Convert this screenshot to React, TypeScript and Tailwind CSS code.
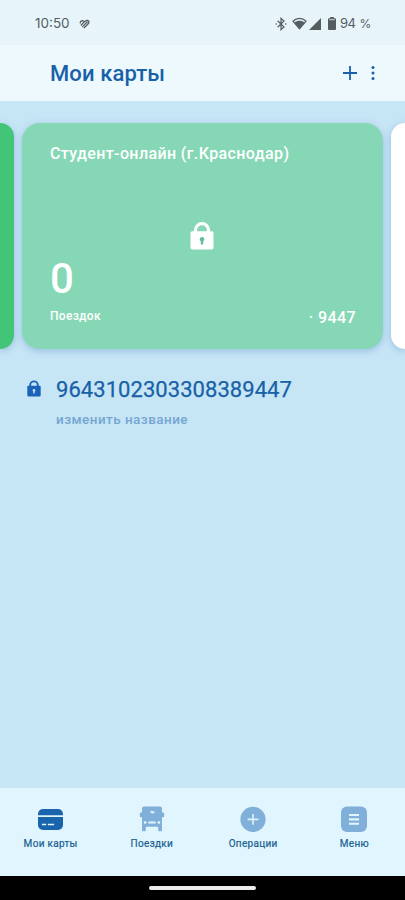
import type { ReactNode } from "react";

interface LockIconProps {
  className?: string;
  holeClassName?: string;
}

function LockIcon({ className, holeClassName }: LockIconProps) {
  return (
    <svg viewBox="0 0 24 28" className={className}>
      <path
        d="M5.5 12V8.2a6.5 6.5 0 0 1 13 0V12"
        fill="none"
        stroke="currentColor"
        strokeWidth="3.2"
      />
      <rect x="0.5" y="9.3" width="23" height="18.2" rx="1.8" fill="currentColor" />
      <g className={holeClassName}>
        <circle cx="12" cy="17.2" r="2.2" />
        <rect x="10.8" y="17.4" width="2.4" height="5.2" rx="0.6" />
      </g>
    </svg>
  );
}

function StatusBar() {
  return (
    <div className="flex h-[45px] items-center bg-[#e7f5fb] pt-[2px] pr-[34px] pl-[35px] text-[#555d61]">
      <span className="font-[Inter,Roboto,sans-serif] text-[13.5px]">10:50</span>
      <svg
        viewBox="0 0 11 10"
        className="ml-[9px] h-[10px] w-[11px]"
        fill="none"
        stroke="currentColor"
        strokeWidth="1.3"
        strokeLinecap="round"
        strokeLinejoin="round"
      >
        <path d="M1.2 3.9C1.4 2 3.3 1.2 4.8 2.2M2.2 6L5.8 2.4M3.6 7.6L8.2 3M5.2 8.8L9 5C10.4 3.6 10.2 1.8 8.8 1.4C7.5 1 6.6 1.7 5.8 2.4" />
      </svg>

      <div className="ml-auto flex items-center">
        <svg
          viewBox="0 0 12 14"
          className="h-[14px] w-[12px]"
          fill="none"
          stroke="currentColor"
          strokeWidth="1.2"
        >
          <path d="M2.6 3.8L9 10L6 12.7V1.3L9 4L2.6 10.2" />
          <circle cx="1.3" cy="7" r="0.8" fill="currentColor" stroke="none" />
          <circle cx="10.7" cy="7" r="0.8" fill="currentColor" stroke="none" />
        </svg>
        <svg viewBox="0 0 15 13" className="ml-[5px] h-[13px] w-[15px]">
          <path
            d="M.9 4.2C4.7.5 10.3.5 14.1 4.2L7.5 11.8Z"
            fill="none"
            stroke="currentColor"
            strokeWidth="1.2"
            strokeLinejoin="round"
          />
          <path d="M2.3 5.3C5.4 3.2 9.6 3.2 12.7 5.3L7.5 12Z" fill="currentColor" />
        </svg>
        <svg viewBox="0 0 12 12" className="ml-[2px] h-[12px] w-[12px]" fill="currentColor">
          <path d="M12 0V12H0Z" />
        </svg>
        <svg viewBox="0 0 8 13" className="ml-[7px] h-[13px] w-[8px]">
          <path
            d="M2.2 0h3.6v1.3H7a1 1 0 0 1 1 1V12a1 1 0 0 1-1 1H1a1 1 0 0 1-1-1V2.3a1 1 0 0 1 1-1h1.2Z"
            fill="currentColor"
          />
          <path d="M1.3 2.7H6.7" stroke="#e7f5fb" strokeWidth="0.8" />
        </svg>
        <span className="ml-[4px] font-[Inter,Roboto,sans-serif] text-[13px] tracking-[-0.4px]">
          94<span className="ml-[4px] text-[12px]">%</span>
        </span>
      </div>
    </div>
  );
}

function Header() {
  return (
    <header className="flex h-[56px] items-center bg-[#eef9fe] pr-[30px] pl-[50px] text-[#1861a8]">
      <h1 className="pt-[2px] text-[22px] leading-none font-medium tracking-[0.1px]">Мои карты</h1>
      <button className="ml-auto" aria-label="Добавить">
        <svg viewBox="0 0 14 14" className="h-[14px] w-[14px]" stroke="currentColor" strokeWidth="1.8">
          <path d="M7 0V14M0 7H14" />
        </svg>
      </button>
      <button className="ml-[14px]" aria-label="Ещё">
        <svg viewBox="0 0 4 14" className="h-[14px] w-[4px]" fill="currentColor">
          <circle cx="2" cy="1.6" r="1.5" />
          <circle cx="2" cy="7" r="1.5" />
          <circle cx="2" cy="12.4" r="1.5" />
        </svg>
      </button>
    </header>
  );
}

function CardCarousel() {
  return (
    <div className="flex h-[226px] gap-2">
      <div className="w-[14px] rounded-r-[18px] bg-[#42c577] shadow-[0_2px_7px_rgba(70,120,190,0.35)]" />
      <section className="flex w-[361px] flex-col rounded-[18px] bg-[#86d7b6] px-[28px] pt-[22px] pb-[24px] text-white shadow-[0_2px_7px_rgba(70,120,190,0.35)]">
        <h2 className="text-[16px] leading-[18px] font-medium tracking-[0.38px]">
          Студент-онлайн (г.Краснодар)
        </h2>
        <LockIcon className="mt-[59px] ml-[140px] h-[28px] w-[24px]" holeClassName="fill-[#62bd99]" />
        <div className="mt-auto flex items-end justify-between">
          <div>
            <p className="text-[42px] leading-[42px] font-medium tracking-tight">0</p>
            <p className="mt-[7px] text-[12px] leading-[18px] font-medium tracking-[0.3px]">Поездок</p>
          </div>
          <p className="-mr-px -mb-[2px] text-[16px] leading-[18px] font-medium tracking-[0.4px]">· 9447</p>
        </div>
      </section>
      <div className="w-[14px] rounded-l-[18px] bg-white shadow-[0_2px_7px_rgba(70,120,190,0.35)]" />
    </div>
  );
}

function CardInfo() {
  return (
    <div className="mt-[28px] flex pl-[27px]">
      <LockIcon
        className="mt-[3px] h-[17px] w-[14px] text-[#1c63b7]"
        holeClassName="fill-[#c6e5f5]"
      />
      <div className="ml-[15px]">
        <p className="text-[22px] leading-[26px] tracking-[0.05px] text-[#1861a8] [-webkit-text-stroke:0.25px_#1861a8]">
          9643102303308389447
        </p>
        <button className="mt-[7px] block text-[13.5px] leading-[18px] font-medium tracking-[0.45px] text-[#75a7d2]">
          изменить название
        </button>
      </div>
    </div>
  );
}

interface NavItemProps {
  label: string;
  children: ReactNode;
}

function NavItem({ label, children }: NavItemProps) {
  return (
    <button className="flex flex-1 flex-col items-center pt-[18px]">
      {children}
      <span className="mt-[5px] text-[10px] leading-[14px] tracking-[0.3px] text-[#195f93] [-webkit-text-stroke:0.2px_#195f93]">
        {label}
      </span>
    </button>
  );
}

function BottomNav() {
  return (
    <nav className="flex h-[88px] bg-[#e0f5fd]">
      <NavItem label="Мои карты">
        <svg viewBox="0 0 26 26" className="h-[26px] w-[26px]" fill="#1a64ac">
          <path d="M0 9.2V8a5 5 0 0 1 5-5h15a5 5 0 0 1 5 5v1.2Z" />
          <path d="M0 11h25v8a5 5 0 0 1-5 5h-15a5 5 0 0 1-5-5Z" />
          <path d="M4 18.5h4.2M9.9 18.5h6.2" stroke="#e0f5fd" strokeWidth="1.6" />
        </svg>
      </NavItem>
      <NavItem label="Поездки">
        <svg viewBox="0 0 26 26" className="h-[26px] w-[26px]" fill="#80afd9">
          <path d="M5 .4h16a2 2 0 0 1 2 2v4.1h1.2a1 1 0 0 1 1 1v2.7a1 1 0 0 1-1 1H23v12.7a1.4 1.4 0 0 1-1.4 1.4h-1a1.4 1.4 0 0 1-1.4-1.4v-3.1H6.8v3.1a1.4 1.4 0 0 1-1.4 1.4h-1A1.4 1.4 0 0 1 3 23.9V11.2H1.8a1 1 0 0 1-1-1V7.5a1 1 0 0 1 1-1H3V2.4a2 2 0 0 1 2-2Z" />
          <g fill="#e0f5fd">
            <path d="M10.8 5.2h4.6v2h-3.3Z" />
            <rect x="4.8" y="15.2" width="2.6" height="2.6" rx="1" />
            <rect x="9.3" y="15.5" width="7.4" height="2" rx="0.5" />
            <rect x="18.6" y="15.2" width="2.6" height="2.6" rx="1" />
          </g>
        </svg>
      </NavItem>
      <NavItem label="Операции">
        <svg viewBox="0 0 26 26" className="h-[26px] w-[26px]">
          <circle cx="13" cy="13.4" r="12.6" fill="#80afd9" />
          <path d="M13 8v10.8M7.6 13.4h10.8" stroke="#e0f5fd" strokeWidth="1.6" />
        </svg>
      </NavItem>
      <NavItem label="Меню">
        <svg viewBox="0 0 26 26" className="h-[26px] w-[26px]">
          <rect y="0.5" width="26" height="25.5" rx="6" fill="#80afd9" />
          <path d="M8 9h10M8 13.4h10M8 17.8h10" stroke="#e0f5fd" strokeWidth="2.1" />
        </svg>
      </NavItem>
    </nav>
  );
}

export default function App() {
  return (
    <div className="flex h-[900px] w-[405px] flex-col overflow-hidden bg-[#c6e5f5] font-[Roboto,sans-serif]">
      <StatusBar />
      <Header />
      <main className="flex-1 pt-[21.5px]">
        <CardCarousel />
        <CardInfo />
      </main>
      <BottomNav />
      <div className="flex h-[24px] items-center justify-center bg-black">
        <div className="h-[4px] w-[107px] rounded-full bg-[#ececec]" />
      </div>
    </div>
  );
}
